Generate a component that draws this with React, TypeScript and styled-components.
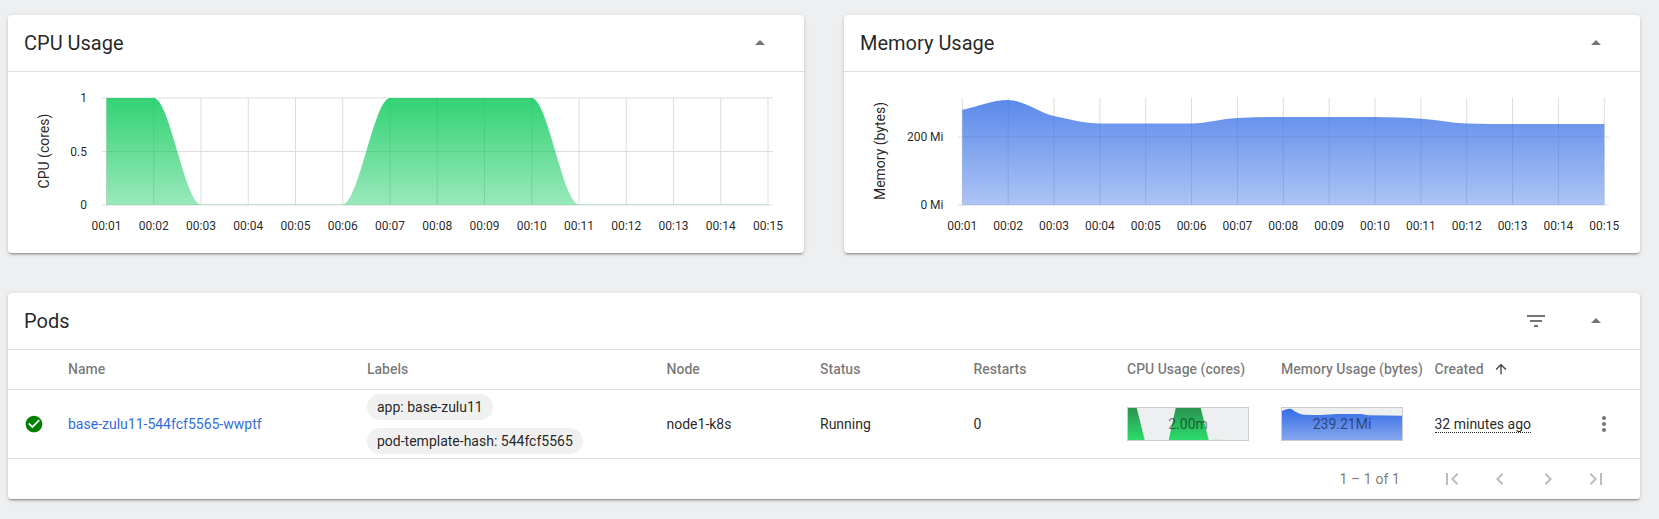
import React from "react";
import styled, { createGlobalStyle } from "styled-components";

const GlobalStyle = createGlobalStyle`
  html, body {
    margin: 0;
    padding: 0;
    background: #edeff0;
    font-family: Roboto, "Liberation Sans", sans-serif;
    color: rgba(0, 0, 0, 0.87);
  }
`;

const Page = styled.div`
  box-sizing: border-box;
  min-height: 100vh;
  padding: 15px 19px 20px 8px;
  display: flex;
  flex-direction: column;
  gap: 40px;
`;

const ChartRow = styled.div`
  display: grid;
  grid-template-columns: 1fr 1fr;
  gap: 40px;
`;

const Card = styled.section`
  background: #fff;
  border-radius: 4px;
  box-shadow: 0 3px 1px -2px rgba(0, 0, 0, 0.2), 0 2px 2px 0 rgba(0, 0, 0, 0.14),
    0 1px 5px 0 rgba(0, 0, 0, 0.12);
`;

const CardHeader = styled.header`
  box-sizing: border-box;
  height: 57px;
  display: flex;
  align-items: center;
  padding: 0 32px 0 16px;
  border-bottom: 1px solid #e0e0e0;
`;

const Title = styled.h2`
  flex: 1;
  margin: 0;
  font-size: 20px;
  font-weight: 400;
  line-height: 28px;
`;

const HeaderButton = styled.button`
  width: 24px;
  height: 24px;
  padding: 0;
  margin-left: 36px;
  border: 0;
  background: none;
  color: rgba(0, 0, 0, 0.54);
  display: flex;
`;

const ChartSvg = styled.svg`
  display: block;
  width: 796px;
  height: 181px;
`;

const GridLine = styled.line`
  stroke: #ddd;
  stroke-width: 1;
`;

const AxisText = styled.text`
  font-size: 12px;
  fill: rgba(0, 0, 0, 0.87);
`;

const AxisTitle = styled.text`
  font-size: 14px;
  fill: rgba(0, 0, 0, 0.87);
`;

const columns = "44px 299px 299.5px 153.5px 153.5px 153.5px 154px 153.5px 153.5px 1fr";

const HeadRow = styled.div`
  height: 40px;
  box-sizing: border-box;
  padding-bottom: 1px;
  display: grid;
  grid-template-columns: ${columns};
  align-items: center;
  border-bottom: 1px solid #e0e0e0;
`;

const BodyRow = styled.div`
  box-sizing: border-box;
  height: 69px;
  display: grid;
  grid-template-columns: ${columns};
  align-items: center;
  border-bottom: 1px solid #e0e0e0;
`;

const HeadCell = styled.div`
  padding-left: 16px;
  font-size: 14px;
  font-weight: 500;
  color: rgba(0, 0, 0, 0.54);
  white-space: nowrap;
  display: flex;
  align-items: center;
`;

const Cell = styled.div`
  padding-left: 16px;
  font-size: 14px;
  white-space: nowrap;
`;

const StatusCell = styled.div`
  padding-left: 16px;
  display: flex;
  color: #008000;
`;

const NameLink = styled.a`
  color: #326ce5;
  text-decoration: none;
`;

const Chips = styled.div`
  display: flex;
  flex-direction: column;
  align-items: flex-start;
  gap: 8px;
`;

const Chip = styled.span`
  box-sizing: border-box;
  height: 26px;
  padding: 0 10px;
  border-radius: 13px;
  background: #f0f0f0;
  line-height: 26px;
  font-size: 14px;
`;

const Spark = styled.div`
  position: relative;
  box-sizing: border-box;
  width: 122px;
  height: 34px;
  background: #edeff0;
  border: 1px solid #ccc;
`;

const SparkSvg = styled.svg`
  display: block;
  width: 120px;
  height: 32px;
`;

const SparkValue = styled.span`
  position: absolute;
  inset: 0;
  display: flex;
  align-items: center;
  justify-content: center;
  font-size: 14px;
  color: rgba(0, 0, 0, 0.5);
`;

const Age = styled.span`
  border-bottom: 1px dotted rgba(0, 0, 0, 0.87);
  line-height: 15px;
  display: inline-block;
`;

const SortIcon = styled.span`
  margin-left: 9px;
  display: flex;
  color: rgba(0, 0, 0, 0.75);
`;

const MenuCell = styled.div`
  display: flex;
  color: rgba(0, 0, 0, 0.54);
  padding-left: 20px;
`;

const Pager = styled.footer`
  height: 40px;
  display: flex;
  align-items: center;
  justify-content: flex-end;
  padding-right: 20px;
  color: rgba(0, 0, 0, 0.54);
`;

const PagerRange = styled.span`
  font-size: 14px;
  letter-spacing: 0.1px;
  margin-right: 28px;
`;

const PagerButton = styled.button`
  width: 48px;
  height: 40px;
  padding: 0;
  border: 0;
  background: none;
  color: rgba(0, 0, 0, 0.26);
  display: flex;
  align-items: center;
  justify-content: center;
`;

// material icon paths
const icons = {
  dropUp: "M7 14l5-5 5 5z",
  filter: "M10 18h4v-2h-4v2zM3 6v2h18V6H3zm3 7h12v-2H6v2z",
  check:
    "M12 2C6.48 2 2 6.48 2 12s4.48 10 10 10 10-4.48 10-10S17.52 2 12 2zm-2 15l-5-5 1.41-1.41L10 14.17l7.59-7.59L19 8l-9 9z",
  up: "M4 12l1.41 1.41L11 7.83V20h2V7.83l5.58 5.59L20 12l-8-8-8 8z",
  more:
    "M12 8c1.1 0 2-.9 2-2s-.9-2-2-2-2 .9-2 2 .9 2 2 2zm0 2c-1.1 0-2 .9-2 2s.9 2 2 2 2-.9 2-2-.9-2-2-2zm0 6c-1.1 0-2 .9-2 2s.9 2 2 2 2-.9 2-2-.9-2-2-2z",
  first: "M18.41 16.59L13.82 12l4.59-4.59L17 6l-6 6 6 6zM6 6h2v12H6z",
  prev: "M15.41 7.41L14 6l-6 6 6 6 1.41-1.41L10.83 12z",
  next: "M10 6L8.59 7.41 13.17 12l-4.58 4.59L10 18l6-6z",
  last: "M5.59 7.41L10.18 12l-4.59 4.59L7 18l6-6-6-6zM16 6h2v12h-2z",
};

const Icon = ({ d, size = 24 }: { d: string; size?: number }) => (
  <svg width={size} height={size} viewBox="0 0 24 24" fill="currentColor">
    <path d={d} />
  </svg>
);

type Point = [number, number];

// same shape as d3's curveMonotoneX
const monotonePath = (pts: Point[]) => {
  const n = pts.length;
  const slopes = pts.slice(1).map((p, i) => (p[1] - pts[i][1]) / (p[0] - pts[i][0]));
  const tangents = pts.map((_, i) => {
    if (i === 0) return slopes[0];
    if (i === n - 1) return slopes[n - 2];
    const a = slopes[i - 1];
    const b = slopes[i];
    return a * b <= 0 ? 0 : (2 * a * b) / (a + b);
  });
  let d = `M${pts[0][0]} ${pts[0][1]}`;
  for (let i = 0; i < n - 1; i++) {
    const h = (pts[i + 1][0] - pts[i][0]) / 3;
    d += `C${pts[i][0] + h} ${pts[i][1] + h * tangents[i]} ${pts[i + 1][0] - h} ${
      pts[i + 1][1] - h * tangents[i + 1]
    } ${pts[i + 1][0]} ${pts[i + 1][1]}`;
  }
  return d;
};

const times = Array.from({ length: 15 }, (_, i) => `00:${String(i + 1).padStart(2, "0")}`);

interface ChartProps {
  id: string;
  originX: number;
  firstX: number;
  lastX: number;
  gridFrom: number;
  gridTo: number;
  color: string;
  title: string;
  titleX: number;
  tickX: number;
  ticks: { label: string; y: number }[];
  values: number[];
}

const AreaChart = (p: ChartProps) => {
  const step = (p.lastX - p.firstX) / 14;
  const xs = times.map((_, i) => p.firstX + step * i);
  const line = monotonePath(p.values.map((y, i) => [xs[i], y]));
  return (
    <ChartSvg viewBox={`${p.originX} 72 796 181`}>
      <defs>
        <linearGradient id={p.id} x1="0" y1="0" x2="0" y2="1">
          <stop offset="0" stopColor={p.color} stopOpacity="0.8" />
          <stop offset="1" stopColor={p.color} stopOpacity="0.4" />
        </linearGradient>
      </defs>
      {p.ticks.map(t => (
        <g key={t.label}>
          <GridLine x1={p.gridFrom} x2={p.gridTo} y1={t.y} y2={t.y} />
          <AxisText x={p.tickX} y={t.y + 4} textAnchor="end">
            {t.label}
          </AxisText>
        </g>
      ))}
      {xs.map((x, i) => (
        <g key={times[i]}>
          <GridLine x1={x} x2={x} y1={97.5} y2={205} />
          <AxisText x={x} y={229.5} textAnchor="middle">
            {times[i]}
          </AxisText>
        </g>
      ))}
      <path d={`${line}L${p.lastX} 205L${p.firstX} 205Z`} fill={`url(#${p.id})`} />
      <AxisTitle
        transform={`translate(${p.titleX} 151) rotate(-90)`}
        textAnchor="middle"
      >
        {p.title}
      </AxisTitle>
    </ChartSvg>
  );
};

const cpuY = (v: number) => 204.4 - v * 106.4;
const memY = (v: number) => 205 - v * 0.34;

const cpuValues = [1, 1, 0, 0, 0, 0, 1, 1, 1, 1, 0, 0, 0, 0, 0].map(cpuY);
const memValues = [280, 309, 262, 240, 240, 240, 256, 259, 259, 259, 254, 240, 238, 238, 238].map(memY);

const memSpark: Point[] = [
  [0, 3], [8, 0.7], [14, 4], [22, 6.7], [39, 7], [55, 6], [79, 6], [87, 7.3], [120, 7.7],
];

const Panel = ({ title, children }: { title: string; children: React.ReactNode }) => (
  <Card>
    <CardHeader>
      <Title>{title}</Title>
      <HeaderButton>
        <Icon d={icons.dropUp} />
      </HeaderButton>
    </CardHeader>
    {children}
  </Card>
);

const App = () => (
  <Page>
    <GlobalStyle />
    <ChartRow>
      <Panel title="CPU Usage">
        <AreaChart
          id="cpuFill"
          originX={8}
          firstX={106.5}
          lastX={768}
          gridFrom={102}
          gridTo={772.7}
          color="#00c752"
          title="CPU (cores)"
          titleX={49}
          tickX={87}
          ticks={[
            { label: "1", y: 98 },
            { label: "0.5", y: 151.5 },
            { label: "0", y: 205 },
          ]}
          values={cpuValues}
        />
      </Panel>
      <Panel title="Memory Usage">
        <AreaChart
          id="memFill"
          originX={844}
          firstX={962.3}
          lastX={1604.3}
          gridFrom={958}
          gridTo={1609}
          color="#326ce5"
          title="Memory (bytes)"
          titleX={885}
          tickX={943.5}
          ticks={[
            { label: "200 Mi", y: 137 },
            { label: "0 Mi", y: 205 },
          ]}
          values={memValues}
        />
      </Panel>
    </ChartRow>
    <Card>
      <CardHeader>
        <Title>Pods</Title>
        <HeaderButton>
          <Icon d={icons.filter} />
        </HeaderButton>
        <HeaderButton>
          <Icon d={icons.dropUp} />
        </HeaderButton>
      </CardHeader>
      <HeadRow>
        <span />
        <HeadCell>Name</HeadCell>
        <HeadCell>Labels</HeadCell>
        <HeadCell>Node</HeadCell>
        <HeadCell>Status</HeadCell>
        <HeadCell>Restarts</HeadCell>
        <HeadCell>CPU Usage (cores)</HeadCell>
        <HeadCell>Memory Usage (bytes)</HeadCell>
        <HeadCell>
          Created
          <SortIcon>
            <Icon d={icons.up} size={16} />
          </SortIcon>
        </HeadCell>
        <span />
      </HeadRow>
      <BodyRow>
        <StatusCell>
          <Icon d={icons.check} size={20} />
        </StatusCell>
        <Cell>
          <NameLink href="#">base-zulu11-544fcf5565-wwptf</NameLink>
        </Cell>
        <Cell>
          <Chips>
            <Chip>app: base-zulu11</Chip>
            <Chip>pod-template-hash: 544fcf5565</Chip>
          </Chips>
        </Cell>
        <Cell>node1-k8s</Cell>
        <Cell>Running</Cell>
        <Cell>0</Cell>
        <Cell>
          <Spark>
            <SparkSvg viewBox="0 0 120 32" preserveAspectRatio="none">
              <defs>
                <linearGradient id="cpuSpark" x1="0" y1="0" x2="0" y2="1">
                  <stop offset="0" stopColor="#2b9450" />
                  <stop offset="1" stopColor="#2ddb6c" />
                </linearGradient>
              </defs>
              <path d="M0 0H8.7L16.7 32H0ZM47.7 0H72.7L80.7 32H40.7Z" fill="url(#cpuSpark)" />
              <path d="M83 32Q90 30 96 32Z" fill="#cfe9d9" />
            </SparkSvg>
            <SparkValue>2.00m</SparkValue>
          </Spark>
        </Cell>
        <Cell>
          <Spark>
            <SparkSvg viewBox="0 0 120 32" preserveAspectRatio="none">
              <defs>
                <linearGradient id="memSpark" x1="0" y1="0" x2="0" y2="1">
                  <stop offset="0" stopColor="#326ce5" />
                  <stop offset="1" stopColor="#87a7ee" />
                </linearGradient>
              </defs>
              <path d={`${monotonePath(memSpark)}L120 32L0 32Z`} fill="url(#memSpark)" />
            </SparkSvg>
            <SparkValue>239.21Mi</SparkValue>
          </Spark>
        </Cell>
        <Cell>
          <Age>32 minutes ago</Age>
        </Cell>
        <MenuCell>
          <Icon d={icons.more} />
        </MenuCell>
      </BodyRow>
      <Pager>
        <PagerRange>1 – 1 of 1</PagerRange>
        <PagerButton>
          <Icon d={icons.first} />
        </PagerButton>
        <PagerButton>
          <Icon d={icons.prev} />
        </PagerButton>
        <PagerButton>
          <Icon d={icons.next} />
        </PagerButton>
        <PagerButton>
          <Icon d={icons.last} />
        </PagerButton>
      </Pager>
    </Card>
  </Page>
);

export default App;
